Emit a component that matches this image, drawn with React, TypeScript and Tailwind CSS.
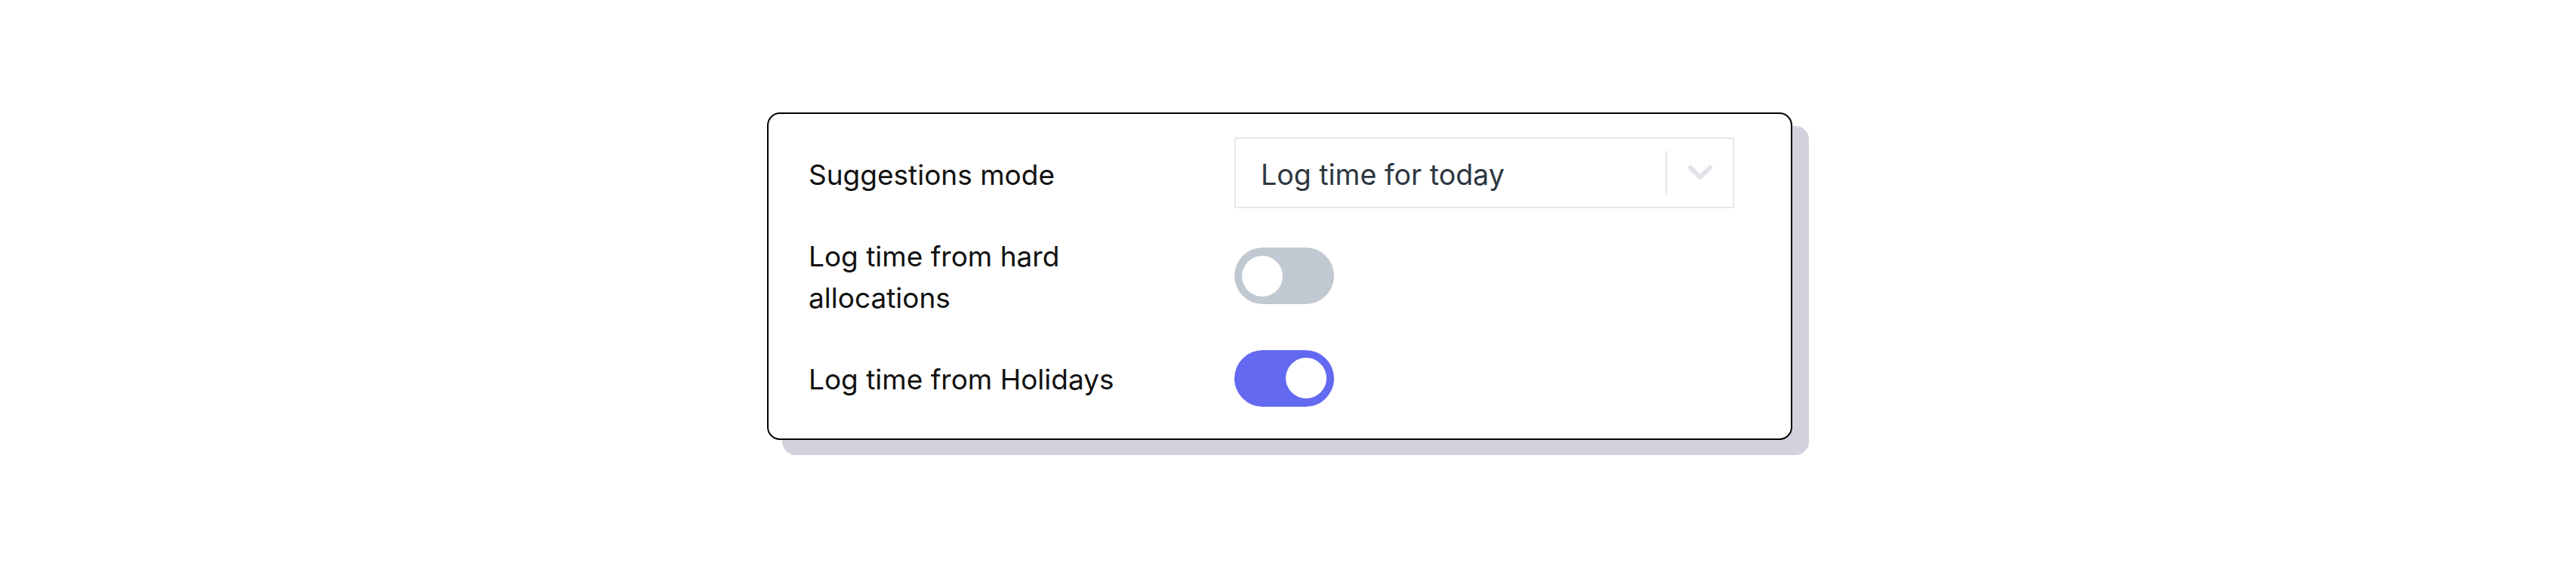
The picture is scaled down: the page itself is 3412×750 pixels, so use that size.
import { useState } from 'react';

function Toggle({ on, onChange }: { on: boolean; onChange: () => void }) {
  return (
    <button
      type="button"
      role="switch"
      aria-checked={on}
      onClick={onChange}
      className={`flex h-[75px] w-[132px] items-center rounded-full px-[10px] ${
        on ? 'justify-end bg-[#6469f1]' : 'justify-start bg-[#c0c8d1]'
      }`}
    >
      <span className="block h-[54px] w-[54px] rounded-full bg-white" />
    </button>
  );
}

export default function App() {
  const [hard, setHard] = useState(false);
  const [holidays, setHolidays] = useState(true);

  return (
    <main className="flex h-[750px] w-full items-center justify-center bg-white font-['Inter','Noto_Sans',sans-serif]">
      <div className="pb-[19px] pr-[22px]">
        <section className="flex w-[1358px] flex-col rounded-[17px] border-2 border-black bg-white pb-[42px] pl-[53px] pt-[31px] shadow-[21px_19px_0_1px_#d2d1dd]">
          <div className="flex h-[94px] items-center">
            <div className="w-[564px] pt-[5px] text-[37px] leading-[55px] text-[#111]">
              Suggestions mode
            </div>
            <div className="flex h-[94px] w-[662px] items-center border-2 border-[#e4e8ed] pl-[33px] pr-[26px]">
              <span className="flex-1 pt-[5px] text-[37.5px] leading-[55px] text-[#2d3741]">
                Log time for today
              </span>
              <span className="h-[58px] w-[2px] bg-[#e2e6ea]" />
              <svg
                width="34"
                height="22"
                viewBox="0 0 34 22"
                fill="none"
                stroke="#dfe3e7"
                strokeWidth="6"
                strokeLinecap="round"
                strokeLinejoin="round"
                className="ml-[27px]"
                aria-hidden="true"
              >
                <path d="M4 4l13 13 13-13" />
              </svg>
            </div>
          </div>

          <div className="mt-[34px] flex items-center">
            <div className="w-[460px] pt-[2px] text-[37px] leading-[55px] text-[#111]">
              Log time from hard allocations
            </div>
            <div className="ml-[104px]">
              <Toggle on={hard} onChange={() => setHard((v) => !v)} />
            </div>
          </div>

          <div className="mt-[42px] flex items-center">
            <div className="w-[460px] pt-[2px] text-[37px] leading-[55px] text-[#111]">
              Log time from Holidays
            </div>
            <div className="ml-[104px]">
              <Toggle on={holidays} onChange={() => setHolidays((v) => !v)} />
            </div>
          </div>
        </section>
      </div>
    </main>
  );
}
